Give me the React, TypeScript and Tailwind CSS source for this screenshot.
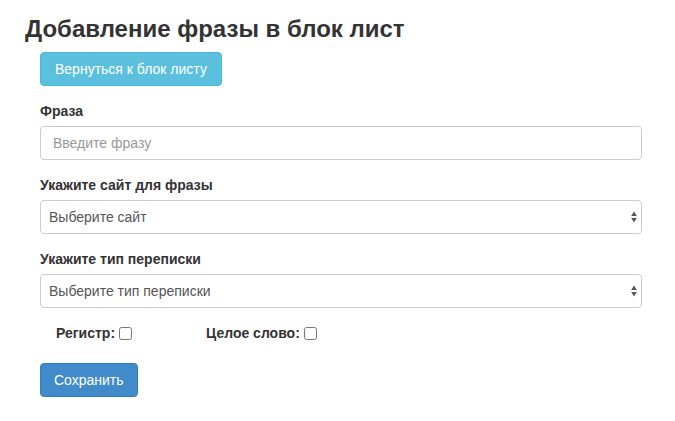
import React from "react";

function SelectArrows() {
  return (
    <svg
      width="6"
      height="12"
      viewBox="0 0 6 12"
      className="pointer-events-none absolute right-[5px] top-1/2 -translate-y-1/2"
    >
      <path d="M3 0.5 L5.8 5 L0.2 5 Z" fill="#555" />
      <path d="M3 11.5 L5.8 7 L0.2 7 Z" fill="#555" />
    </svg>
  );
}

function FieldSelect({ label, placeholder }: { label: string; placeholder: string }) {
  return (
    <div className="mb-[15px]">
      <label className="mb-[5px] block text-[14px] font-bold leading-[20px]">{label}</label>
      <div className="relative">
        <select
          defaultValue=""
          className="block h-[34px] w-full appearance-none rounded-[4px] border border-[#ccc] bg-white pl-[8px] pr-6 text-[14px] text-[#555] outline-none"
        >
          <option value="" disabled>
            {placeholder}
          </option>
        </select>
        <SelectArrows />
      </div>
    </div>
  );
}

export default function App() {
  return (
    <main className="min-h-screen bg-white font-['Liberation_Sans',Arial,sans-serif] text-[14px] text-[#333]">
      <h3 className="mb-[8px] pl-[25px] pt-[14px] text-[24px] font-bold leading-[30px] text-[#333]">
        Добавление фразы в блок лист
      </h3>

      <form className="ml-[40px] w-[602px]">
        <div className="mb-[15px]">
          <button
            type="button"
            className="h-[34px] rounded-[4px] border border-[#46b8da] bg-[#5bc0de] px-[14px] text-[14px] leading-[20px] text-white"
          >
            Вернуться к блок листу
          </button>
        </div>

        <div className="mb-[15px]">
          <label className="mb-[5px] block text-[14px] font-bold leading-[20px]">Фраза</label>
          <input
            type="text"
            placeholder="Введите фразу"
            className="block h-[34px] w-full rounded-[4px] border border-[#ccc] bg-white px-[12px] text-[14px] text-[#555] outline-none placeholder:text-[#999]"
          />
        </div>

        <FieldSelect label="Укажите сайт для фразы" placeholder="Выберите сайт" />
        <FieldSelect label="Укажите тип переписки" placeholder="Выберите тип переписки" />

        <div className="mb-[20px] flex h-[20px] items-center pl-[16px]">
          <label className="flex w-[150px] items-center font-bold leading-[20px]">
            Регистр:
            <input type="checkbox" className="ml-[4px] h-[13px] w-[13px]" />
          </label>
          <label className="flex items-center font-bold leading-[20px]">
            Целое слово:
            <input type="checkbox" className="ml-[4px] h-[13px] w-[13px]" />
          </label>
        </div>

        <button
          type="submit"
          className="h-[34px] rounded-[4px] border border-[#357ebd] bg-[#428bca] px-[13px] text-[14px] leading-[20px] text-white"
        >
          Сохранить
        </button>
      </form>
    </main>
  );
}
